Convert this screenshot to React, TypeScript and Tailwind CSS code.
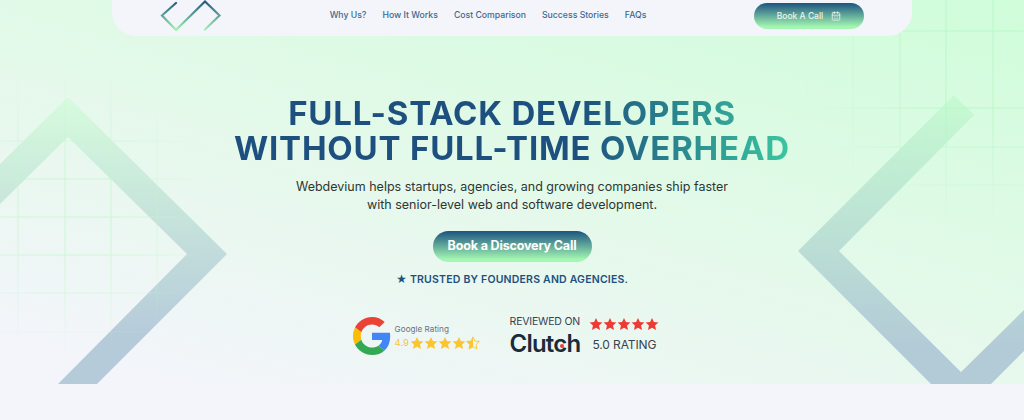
import React from "react";
import { CalendarDays } from "lucide-react";

const navLinks = ["Why Us?", "How It Works", "Cost Comparison", "Success Stories", "FAQs"];
const gridLeftX = [18, 65, 111, 157];
const gridLeftY = [141, 179, 217, 255, 293, 332];
const gridRightX = [807, 853, 900, 946, 993];
const gridRightY = [31, 108, 147, 185];
const starPoints = "12,1.500 15.200,8.600 23,9.400 17.200,14.600 18.900,22.300 12,18.300 5.100,22.300 6.800,14.600 1,9.400 8.800,8.600";

function Star({ size, half = false }: { size: number; half?: boolean }) {
  if (half) {
    return (
      <svg width={size} height={size} viewBox="0 0 24 24">
        <polygon points={starPoints} fill="none" stroke="currentColor" strokeWidth="1.500" />
        <polygon points="12,1.500 12,18.300 5.100,22.300 6.800,14.600 1,9.400 8.800,8.600" fill="currentColor" />
      </svg>
    );
  }
  return (
    <svg width={size} height={size} viewBox="0 0 24 24">
      <polygon points={starPoints} fill="currentColor" />
    </svg>
  );
}

function Logo() {
  return (
    <svg width="62" height="32" viewBox="160 0 62 32" fill="none">
      <defs>
        <linearGradient id="logoFill" gradientUnits="userSpaceOnUse" x1="190" y1="0" x2="190" y2="31">
          <stop offset="0" stopColor="#1b4f7e" />
          <stop offset="1" stopColor="#a6f8b2" />
        </linearGradient>
      </defs>
      <path
        d="M176 3 L162 15.500 L176 30 L205 1.500 L219.500 15.500 L205 29.500"
        stroke="url(#logoFill)"
        strokeWidth="2.200"
        strokeLinecap="round"
      />
    </svg>
  );
}

function HeroBackdrop() {
  return (
    <svg className="absolute inset-0" width="1024" height="384" viewBox="0 0 1024 384">
      <defs>
        <linearGradient id="chevronLeft" gradientUnits="userSpaceOnUse" x1="0" y1="100" x2="0" y2="335">
          <stop offset="0" stopColor="#d6fbdd" />
          <stop offset="1" stopColor="#b6cbda" />
        </linearGradient>
        <linearGradient id="chevronRight" gradientUnits="userSpaceOnUse" x1="0" y1="100" x2="0" y2="345">
          <stop offset="0" stopColor="#c6fad2" />
          <stop offset="1" stopColor="#b3cbd7" />
        </linearGradient>
        <radialGradient id="fadeLeft" gradientUnits="userSpaceOnUse" cx="70" cy="210" r="150">
          <stop offset="0.3" stopColor="#fff" />
          <stop offset="1" stopColor="#000" />
        </radialGradient>
        <radialGradient id="fadeRight" gradientUnits="userSpaceOnUse" cx="970" cy="60" r="170">
          <stop offset="0.3" stopColor="#fff" />
          <stop offset="1" stopColor="#000" />
        </radialGradient>
        <mask id="maskLeft">
          <rect width="1024" height="384" fill="url(#fadeLeft)" />
        </mask>
        <mask id="maskRight">
          <rect width="1024" height="384" fill="url(#fadeRight)" />
        </mask>
      </defs>
      <path d="M68 97 L227 254 L97 384 L58 384 L187 254 L68 137 L0 204 L0 164 Z" fill="url(#chevronLeft)" />
      <path
        d="M954 95 L974 115 L839 251 L961 372 L1024 310 L1024 351 L991 384 L931 384 L798 251 Z"
        fill="url(#chevronRight)"
      />
      <g mask="url(#maskLeft)" stroke="#c4f6cf" strokeWidth="1" opacity="0.8">
        {gridLeftX.map((x) => (
          <line key={x} x1={x} y1="80" x2={x} y2="360" />
        ))}
        {gridLeftY.map((y) => (
          <line key={y} x1="0" y1={y} x2="230" y2={y} />
        ))}
      </g>
      <g mask="url(#maskRight)" stroke="#b4f7c3" strokeWidth="1" opacity="0.8">
        {gridRightX.map((x) => (
          <line key={x} x1={x} y1="0" x2={x} y2="220" />
        ))}
        {gridRightY.map((y) => (
          <line key={y} x1="780" y1={y} x2="1024" y2={y} />
        ))}
      </g>
    </svg>
  );
}

function GoogleBadge() {
  return (
    <div className="flex items-center gap-1">
      <svg width="38" height="38" viewBox="0 0 48 48">
        <path fill="#EA4335" d="M24 9.500c3.540 0 6.710 1.220 9.210 3.600l6.850-6.850C35.900 2.380 30.470 0 24 0 14.620 0 6.510 5.380 2.560 13.220l7.980 6.190C12.430 13.720 17.740 9.500 24 9.500z" />
        <path fill="#4285F4" d="M46.980 24.550c0-1.570-.15-3.090-.38-4.550H24v9.020h12.940c-.58 2.960-2.260 5.480-4.780 7.180l7.730 6c4.510-4.180 7.090-10.360 7.090-17.650z" />
        <path fill="#FBBC05" d="M10.530 28.590c-.48-1.450-.76-2.990-.76-4.590s.27-3.140.76-4.590l-7.980-6.190C.92 16.460 0 20.120 0 24c0 3.880.92 7.540 2.560 10.780l7.970-6.190z" />
        <path fill="#34A853" d="M24 48c6.480 0 11.930-2.130 15.890-5.810l-7.730-6c-2.150 1.450-4.920 2.300-8.160 2.300-6.260 0-11.570-4.220-13.470-9.910l-7.980 6.190C6.510 42.620 14.620 48 24 48z" />
      </svg>
      <div className="flex flex-col gap-[2px] pt-[1px]">
        <span className="text-[8.200px] leading-[10px] text-[#6b7280]">Google Rating</span>
        <div className="flex items-center gap-[2px]">
          <span className="w-[13px] text-[9.500px] leading-[14px] text-[#f5c542]">4.9</span>
          <div className="flex text-[#fbc531]">
            <Star size={14} />
            <Star size={14} />
            <Star size={14} />
            <Star size={14} />
            <Star size={14} half />
          </div>
        </div>
      </div>
    </div>
  );
}

function ClutchBadge() {
  return (
    <div className="flex gap-[9px] text-[#39424e]">
      <div className="flex flex-col pt-[1px]">
        <span className="text-[10.500px] leading-[14px] tracking-[-0.2px]">REVIEWED ON</span>
        <span className="relative mt-[1px] font-semibold text-[24px] leading-[28px] tracking-[-0.8px] text-[#1c2b39]">
          Clutch
          <span className="absolute left-[50px] top-[14px] w-[4px] h-[4px] rounded-full bg-[#ef3e36]" />
        </span>
      </div>
      <div className="flex flex-col items-center pt-[3px]">
        <div className="flex text-[#ef3a33]">
          <Star size={14} />
          <Star size={14} />
          <Star size={14} />
          <Star size={14} />
          <Star size={14} />
        </div>
        <span className="text-[12px] leading-[14px] mt-[7px] tracking-[-0.1px]">5.0 RATING</span>
      </div>
    </div>
  );
}

export default function App() {
  return (
    <div className="w-full h-[420px] overflow-hidden bg-[#f3f5fa] font-['Inter',sans-serif]">
      <section className="relative h-[384px] bg-[linear-gradient(195deg,#cffdda_0%,#e4f9ea_50%,#f3f5fa_92%)]">
        <HeroBackdrop />
        <div className="relative flex flex-col items-center">
          <nav className="w-[800px] h-[36px] pb-1 pl-[48px] pr-[48px] rounded-b-[24px] bg-[#f3f5fa] flex items-center justify-between">
            <Logo />
            <ul className="flex gap-4 text-[8.700px] font-medium text-[#3a6a92]">
              {navLinks.map((link) => (
                <li key={link}>{link}</li>
              ))}
            </ul>
            <button className="w-[110px] h-[26px] rounded-full bg-[linear-gradient(180deg,#1c5480,#a4f7b2_92%)] text-[#e8f5ef] text-[8.500px] font-medium flex items-center justify-center gap-2">
              Book A Call
              <CalendarDays size={10} />
            </button>
          </nav>
          <h1 className="mt-[60px] text-center text-[33px] leading-[35px] font-bold tracking-[0.8px] text-transparent bg-clip-text bg-[linear-gradient(90deg,#1d4f7f_0%,#1d4f7f_62%,#3ac6a0_100%)]">
            FULL-STACK DEVELOPERS
            <br />
            WITHOUT FULL-TIME OVERHEAD
          </h1>
          <p className="mt-[12px] text-center text-[12.500px] leading-[18px] text-[#2c3733]">
            Webdevium helps startups, agencies, and growing companies ship faster
            <br />
            with senior-level web and software development.
          </p>
          <button className="mt-[17px] w-[159px] h-[31px] rounded-full bg-[linear-gradient(180deg,#1c5480,#a4f7b2_92%)] text-white text-[12.500px] font-bold tracking-[-0.15px]">
            Book a Discovery Call
          </button>
          <p className="mt-[11px] text-[10.500px] leading-[14px] font-semibold text-[#1d4f7f] tracking-[0.2px]">
            ★ TRUSTED BY FOUNDERS AND AGENCIES.
          </p>
          <div className="mt-[27px] mr-[12px] flex items-center gap-[30px]">
            <GoogleBadge />
            <ClutchBadge />
          </div>
        </div>
      </section>
    </div>
  );
}
